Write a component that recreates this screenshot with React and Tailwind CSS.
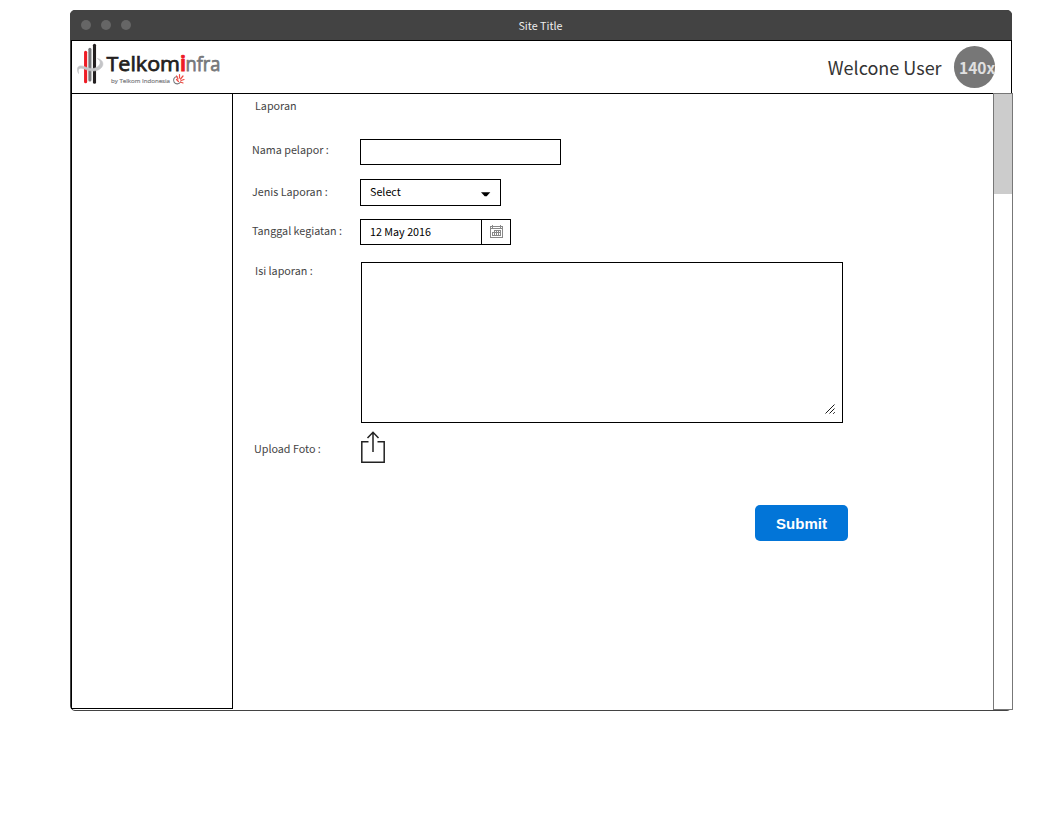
import React from "react";

const uiFont = "font-['Noto_Sans_CJK_JP','Noto_Sans',sans-serif]";

function Logo() {
  return (
    <svg className="block h-[50px] w-[150px]" viewBox="75 42 150 50">
      <g strokeLinecap="round" strokeWidth="3.1" fill="none">
        <path d="M85.600 52.300V81.700" stroke="#ee1c25" />
        <path d="M89.900 49.300V80" stroke="#77787b" />
        <path d="M94.500 45.300V82.300" stroke="#231f20" />
      </g>
      <path d="M78.500 73.500C75.500 66 79.500 64.500 85.500 67C91 69.300 96 69 99 65.500C101 63 100.500 60.500 97.500 58.500C103.500 60 104.500 65 100.500 68.500C96 72 90 71.500 84.500 69C79.500 67 77.500 68.500 78.500 73.500Z" fill="#c4c5c7" stroke="#c4c5c7" strokeWidth=".6" />
      <g fontFamily="'Open Sans', sans-serif" fontWeight="400" fontSize="20.5" strokeWidth=".75">
        <text x="106.500" y="71" textLength="73.500" lengthAdjust="spacingAndGlyphs" fill="#231f20" stroke="#231f20">Telkom</text>
        <text x="180" y="71" fontWeight="700" textLength="6" lengthAdjust="spacingAndGlyphs" fill="#ee1c25" stroke="#ee1c25">i</text>
        <text x="185.500" y="71" textLength="35" lengthAdjust="spacingAndGlyphs" fill="#77787b" stroke="#77787b">nfra</text>
      </g>
      <text x="111" y="83" fontFamily="'Open Sans', sans-serif" fontSize="5.5" fontWeight="400" textLength="59" lengthAdjust="spacingAndGlyphs" fill="#77787b" stroke="#77787b" strokeWidth=".15">by Telkom Indonesia</text>
      <g fill="none" strokeLinecap="round">
        <path d="M177 76.500A3.700 3.700 0 1 0 180.500 82" stroke="#77787b" strokeWidth="1.100" />
        <path d="M176.500 79.500L178.500 81.500M178 79L176.500 76M179.500 78L179.500 74.500M180.500 79L183 76M181 80.500L184 79.500M180.500 82L183 83" stroke="#ee4b43" strokeWidth="1.200" />
      </g>
    </svg>
  );
}

function Label({ className, children }) {
  return <span className={`text-[10.75px] leading-4 whitespace-nowrap text-[#444] ${className}`}>{children}</span>;
}

function CalendarIcon() {
  return (
    <svg className="block h-[14px] w-[13px]" viewBox="0 0 13 14" fill="none" stroke="#888" shapeRendering="crispEdges">
      <path d="M.5 1.500H12.500V12.500H.5ZM.5 3.500H12.500M2.500 0V3M10.500 0V3" />
      <path d="M4 5.500H11M2 7.500H11M2 10.500H11M2.500 7V11M4.500 5V11M6.500 5V11M8.500 5V11M10.500 5V11" />
    </svg>
  );
}

export default function App() {
  return (
    <div className={`h-[820px] w-[1063px] overflow-hidden bg-white pt-[10px] pl-[70px] ${uiFont}`}>
      <div className="h-[701px] w-[942px] rounded-[5px] border border-[#434343] bg-white">
        <div className="-mx-px -mt-px flex h-[30px] items-center rounded-t-[5px] bg-[#434343] pl-[11.4px]">
          <div className="flex w-[50px] gap-[10px]">
            <i className="size-[10px] rounded-full bg-[#666]" />
            <i className="size-[10px] rounded-full bg-[#666]" />
            <i className="size-[10px] rounded-full bg-[#666]" />
          </div>
          <div className="mr-[62.4px] flex-1 pt-[2px] text-center text-[10.75px] leading-4 text-[#eee]">Site Title</div>
        </div>
        <header className="-mr-px flex h-[54px] w-[941px] items-center justify-between border border-black bg-white pr-[16px] pl-[3px]">
          <Logo />
          <div className="flex items-center gap-[12.4px]">
            <span className="-mt-px text-[18px] leading-7 whitespace-nowrap text-[#333]">Welcone User</span>
            <span className="flex h-[42px] w-[41px] items-center rounded-full bg-[#777] pl-[5px] text-[15.5px] leading-6 font-bold whitespace-nowrap text-[#e0e0e0]">140x</span>
          </div>
        </header>
        <div className="-mt-px flex h-[617px] w-[942px]">
          <aside className="h-[616px] w-[162px] shrink-0 border border-black" />
          <main className="flex flex-1 flex-col items-start">
            <Label className="mt-[5px] ml-[22px]">Laporan</Label>
            <div className="mt-[25px] ml-[19px] flex h-[26px]">
              <Label className="mt-[3px] w-[108px]">Nama pelapor :</Label>
              <div className="w-[201px] border border-black" />
            </div>
            <div className="mt-[14px] ml-[19px] flex h-[27px]">
              <Label className="mt-[5px] w-[108px]">Jenis Laporan :</Label>
              <div className="flex w-[141px] items-start justify-between border border-black pt-[4px] pr-[9px] pl-[9px] text-[10.75px] leading-4 text-black">
                Select
                <svg className="mt-[8px] h-[5px] w-[10px]" viewBox="0 0 10 5"><path d="M0 .3H9.300L5.700 4.300H3.700Z" /></svg>
              </div>
            </div>
            <div className="mt-[13px] ml-[19px] flex h-[26px]">
              <Label className="mt-[4px] w-[108px]">Tanggal kegiatan :</Label>
              <div className="flex w-[151px] border border-black">
                <div className="w-[121px] border-r border-black pt-[4px] pl-[9px] text-[10.75px] leading-4 text-black">12 May 2016</div>
                <div className="flex flex-1 items-start pt-[5px] pl-[8px]"><CalendarIcon /></div>
              </div>
            </div>
            <div className="mt-[17px] ml-[22px] flex h-[161px]">
              <Label className="mt-px w-[106px]">Isi laporan :</Label>
              <div className="flex w-[482px] items-end justify-end border border-black pr-[7px] pb-[8px]">
                <svg className="size-[10px]" viewBox="0 0 10 10" stroke="#000" strokeWidth=".9"><path d="M.5 9.500L9.500 .5M4.500 9.500L9.500 4.500M8.200 9.800L9.800 8.200" /></svg>
              </div>
            </div>
            <div className="mt-[8px] ml-[21px] flex h-[33px]">
              <Label className="mt-[10px] w-[107px]">Upload Foto :</Label>
              <svg className="h-[33px] w-[24px]" viewBox="0 0 24 33" fill="none" stroke="#222" strokeWidth="1.500">
                <path d="M7.500 10.700H.8V31.300H23.200V10.700H16.500M12 21V1.500M6.500 7L12 1.300L17.500 7" />
              </svg>
            </div>
            <button className="mt-[41px] ml-[522px] h-[36px] w-[93px] rounded-[5px] bg-[#0275d8] pt-[2px] font-['Liberation_Sans',Arial,sans-serif] text-[15px] leading-5 font-bold text-white">Submit</button>
          </main>
          <div className="w-[20px] shrink-0 border border-[#777] bg-white">
            <div className="h-[100px] bg-[#ccc]" />
          </div>
        </div>
      </div>
    </div>
  );
}
